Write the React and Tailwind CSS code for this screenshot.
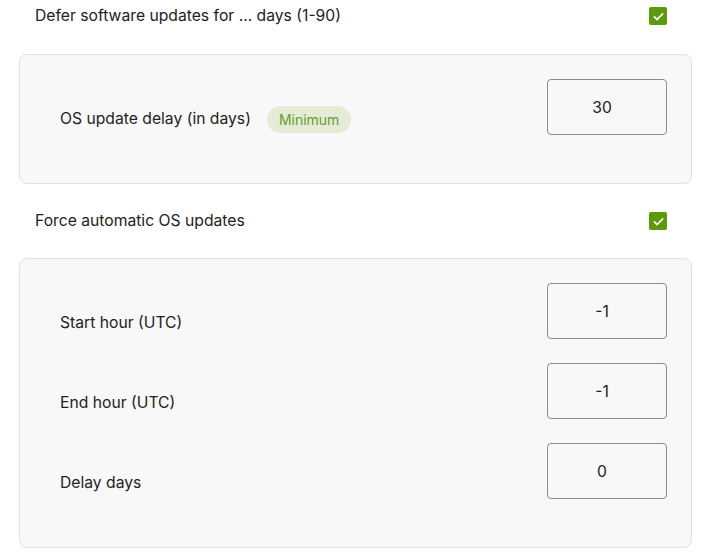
import React from "react";

const Check = () => (
  <span className="flex h-[18px] w-[18px] items-center justify-center rounded-[2px] bg-[#5c9a0c]">
    <svg viewBox="0 0 16 16" className="h-[13px] w-[13px]" fill="none" stroke="white" strokeWidth={2}>
      <path d="M3 8.5l3.2 3.2L13 4.8" strokeLinecap="square" />
    </svg>
  </span>
);

const TitleRow = ({ label }) => (
  <div className="flex h-[18px] items-center justify-between pl-4 pr-[25px]">
    <span className="text-[15.7px] text-[#222]">{label}</span>
    <Check />
  </div>
);

const Field = ({ label, value, badge, last }) => (
  <div className={(last ? "" : "mb-6 ") + "flex items-start justify-between"}>
    <div className="mt-[30px] flex items-center gap-4 pl-4">
      <span className="text-[15.7px] leading-5 text-[#222]">{label}</span>
      {badge && (
        <span className="-my-1 rounded-full bg-[#e4ebd7] px-[12px] py-[4px] text-[14px] leading-[19px] text-[#6b9c2c]">
          {badge}
        </span>
      )}
    </div>
    <input
      readOnly
      value={value}
      className="h-[56px] w-[120px] rounded-[4px] border border-[#8c8c8c] bg-[#f8f8f8] pr-[10px] text-center text-[15.7px] text-[#222] outline-none"
    />
  </div>
);

const Card = ({ children }) => (
  <div className="rounded-lg border border-[#e2e2e2] bg-[#f8f8f8] pb-12 pl-6 pr-[24px] pt-6">{children}</div>
);

export default function App() {
  return (
    <div className="min-h-[556px] bg-white pl-[19px] pr-[12px] pt-[7px] font-['Inter',sans-serif]">
      <TitleRow label="Defer software updates for ... days (1-90)" />
      <div className="mt-[29px]">
        <Card>
          <Field label="OS update delay (in days)" value="30" badge="Minimum" last />
        </Card>
      </div>
      <div className="mt-[28px]">
        <TitleRow label="Force automatic OS updates" />
      </div>
      <div className="mt-[28px]">
        <Card>
          <Field label="Start hour (UTC)" value="-1" />
          <Field label="End hour (UTC)" value="-1" />
          <Field label="Delay days" value="0" last />
        </Card>
      </div>
    </div>
  );
}
